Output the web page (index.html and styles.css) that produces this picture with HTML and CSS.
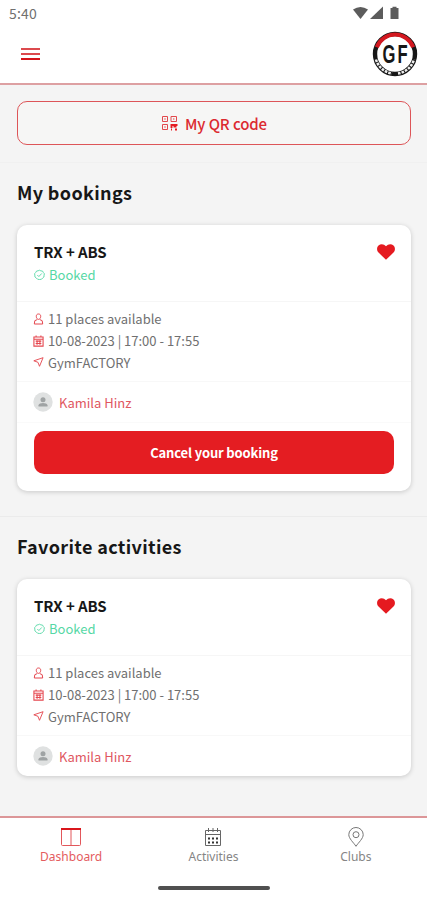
FILE: index.html
```html
<!DOCTYPE html>
<html lang="en">
<head>
    <meta charset="UTF-8">
    <title>GymFACTORY - Dashboard</title>
    <meta name="viewport" content="width=device-width, initial-scale=1.0">
    <link rel="stylesheet" href="styles.css">
</head>
<body>
    <!-- Shared icons -->
    <svg class="sprite" width="0" height="0">
        <symbol id="heart" viewBox="0 0 18 16">
            <path d="M9 15.8 1.5 8.6C-.4 6.700-.4 3.400 1.500 1.600 3.600-.4 6.900-.2 9 2.300c2.100-2.500 5.400-2.700 7.500-.7 1.900 1.800 1.900 5.100 0 7z" fill="#e51a20"/>
        </symbol>
        <symbol id="check" viewBox="0 0 12 12">
            <path d="M6 .8 7.500 1.500 9.300 1.700 10.200 3.300 11.300 4.600 11 6.300 10.800 8.200 9.400 9.300 8.100 10.700 6 10.900 4 10.700 2.600 9.300 1 8.100.9 6.200.7 4.500 1.900 3.200 2.800 1.700 4.500 1.400z"/>
            <path d="M3.600 6 5.300 7.700 8.500 4.300"/>
        </symbol>
        <symbol id="person" viewBox="0 0 10 12">
            <path d="M5 1C3.300 1 2.700 2.200 2.800 3.600 2.900 5.200 3.800 6.400 5 6.400s2.100-1.200 2.200-2.800C7.300 2.200 6.700 1 5 1zM3.500 6.700 1.300 7.700.8 11h8.400l-.5-3.300-2.200-1"/>
        </symbol>
        <symbol id="date" viewBox="0 0 10 11">
            <path d="M.8 1.800h8.400v8.400H.8zM.8 3.900h8.400M2.800.4v1.800M7.200.4v1.800M2.400 5.600h5.200M2.400 7.800h5.200M3.700 4.700v4.200M6.300 4.700v4.200"/>
        </symbol>
        <symbol id="arrow" viewBox="0 0 12 11">
            <path d="M11 .8.9 4.200l4.500 1.600 1.700 4.400z"/>
        </symbol>
        <symbol id="avatar" viewBox="0 0 20 20">
            <circle cx="10" cy="10" r="9.700" fill="#dfe1e1"/>
            <circle cx="10" cy="7.700" r="2.500" fill="#9fa3a4"/>
            <path d="M5.500 14.500v-1.200c0-1.500 2.600-2.300 4.500-2.300s4.500.8 4.500 2.300v1.200z" fill="#9fa3a4"/>
        </symbol>
    </svg>

    <div class="status-bar">
        <span class="clock">5:40</span>
        <svg class="signals" width="48" height="14" viewBox="0 0 48 14" fill="#5c5c5c">
            <path d="M0 3.600Q7.500 -1.500 15 3.600L7.500 13z"/>
            <path d="M17 13 30 .5V13z"/>
            <path d="M37.500 2h2V.7h4V2h2v11h-8z"/>
        </svg>
    </div>

    <header class="header">
        <button class="menu-btn"><span></span><span></span><span></span></button>
        <svg class="logo" width="46" height="46" viewBox="0 0 46 46" fill="none">
            <circle cx="23" cy="23" r="20" fill="#fff" stroke="#171717" stroke-width="4.400"/>
            <!-- red upper arc, light band below -->
            <path d="M4.800 16.300A19.400 19.400 0 0 1 41.200 16.300" stroke="#d31820" stroke-width="4"/>
            <path d="M4 28.500A19.800 19.800 0 0 0 20 42.500M26 42.500A19.800 19.800 0 0 0 42 28.500" stroke="#ededed" stroke-width="2.600" stroke-dasharray="2.600 1.100"/>
            <text class="logo-letters" x="10.500" y="32" textLength="27" lengthAdjust="spacingAndGlyphs">GF</text>
        </svg>
    </header>

    <main class="content">
        <section class="qr">
            <button class="qr-btn">
                <svg width="17" height="16" viewBox="0 0 17 16" fill="none" stroke="#e2484c">
                    <path d="M1.500 1.500h5v5h-5zM10 1.500h5.500v5H10zM1.500 9.500h5v5h-5z"/>
                    <path d="M3.500 4h1M12.300 4h1M3.500 12h1" stroke-width="1.500"/>
                    <path d="M9.500 10h7M10.500 9.500v3.500M12.500 11.500h3M10 14.500h1M14 14.500h2" stroke="#e51a20" stroke-width="1.900"/>
                </svg>
                <span>My QR code</span>
            </button>
        </section>

        <section class="section">
            <h2>My bookings</h2>
            <article class="card">
                <div class="card-head">
                    <div>
                        <h3>TRX + ABS</h3>
                        <div class="booked"><svg class="icon"><use href="#check"/></svg><span>Booked</span></div>
                    </div>
                    <svg class="heart"><use href="#heart"/></svg>
                </div>
                <div class="details">
                    <div class="row"><svg class="icon"><use href="#person"/></svg><span>11 places available</span></div>
                    <div class="row"><svg class="icon"><use href="#date"/></svg><span>10-08-2023 | 17:00 - 17:55</span></div>
                    <div class="row"><svg class="icon"><use href="#arrow"/></svg><span>GymFACTORY</span></div>
                </div>
                <div class="trainer"><svg class="avatar"><use href="#avatar"/></svg><span>Kamila Hinz</span></div>
                <div class="card-action">
                    <button class="cancel-btn">Cancel your booking</button>
                </div>
            </article>
        </section>

        <section class="section favorites">
            <h2>Favorite activities</h2>
            <article class="card">
                <div class="card-head">
                    <div>
                        <h3>TRX + ABS</h3>
                        <div class="booked"><svg class="icon"><use href="#check"/></svg><span>Booked</span></div>
                    </div>
                    <svg class="heart"><use href="#heart"/></svg>
                </div>
                <div class="details">
                    <div class="row"><svg class="icon"><use href="#person"/></svg><span>11 places available</span></div>
                    <div class="row"><svg class="icon"><use href="#date"/></svg><span>10-08-2023 | 17:00 - 17:55</span></div>
                    <div class="row"><svg class="icon"><use href="#arrow"/></svg><span>GymFACTORY</span></div>
                </div>
                <div class="trainer"><svg class="avatar"><use href="#avatar"/></svg><span>Kamila Hinz</span></div>
            </article>
        </section>
    </main>

    <footer class="footer">
        <nav class="tabs">
            <a class="tab active">
                <svg width="22" height="20" viewBox="0 0 22 20" fill="none" stroke="#e2575b">
                    <path d="M1.500 2v15.500q0 1 1 1h17q1 0 1-1V2M11 2v16.500"/>
                    <path d="M1 2h20" stroke="#d9161c" stroke-width="2"/>
                </svg>
                <span>Dashboard</span>
            </a>
            <a class="tab">
                <svg width="22" height="20" viewBox="0 0 22 20" fill="none" stroke="#666">
                    <path d="M3.500 3.500h15v15h-15zM3.500 7.500h15M6.500 1v4M11 1v4M15.500 1v4"/>
                    <path d="M6 11.500h10M6 15.500h10" stroke="#333" stroke-width="2" stroke-dasharray="2 2"/>
                </svg>
                <span>Activities</span>
            </a>
            <a class="tab">
                <svg width="22" height="20" viewBox="0 0 22 20" fill="none" stroke="#777">
                    <path d="M11 19.300C8.500 15.500 3.800 11.500 3.800 7.700a7.200 7.200 0 0 1 14.400 0c0 3.800-4.700 7.800-7.200 11.600z"/>
                    <circle cx="11" cy="7.700" r="3"/>
                </svg>
                <span>Clubs</span>
            </a>
        </nav>
        <div class="home-bar"></div>
    </footer>
</body>
</html>
```
FILE: styles.css
```css
* {
    box-sizing: border-box;
}

body {
    margin: 0;
    height: 900px;
    display: flex;
    flex-direction: column;
    overflow: hidden;
    background: #fff;
    color: #707070;
    font-family: "Noto Sans CJK SC", "Noto Sans", sans-serif;
    font-size: 13px;
}

h2, h3 {
    margin: 0;
    color: #171717;
}

button {
    font-family: inherit;
    padding: 0;
    cursor: pointer;
}

svg {
    display: block;
    flex: none;
}

.sprite {
    position: absolute;
}

/* === Phone status bar === */
.status-bar {
    height: 28px;
    padding: 0 26px 3px 9px;
    display: flex;
    align-items: center;
    justify-content: space-between;
}

.clock {
    color: #707070;
    font-size: 14px;
    letter-spacing: 0.2px;
}

/* === Header === */
.header {
    height: 57px;
    padding: 0 9px 3px 21px;
    display: flex;
    align-items: center;
    justify-content: space-between;
    border-bottom: 2px solid #dda0a2;
}

.menu-btn {
    width: 19px;
    display: flex;
    flex-direction: column;
    gap: 3px;
    border: 0;
    background: none;
}

.menu-btn span {
    height: 2px;
    background: #dc4a4e;
}

.menu-btn span:last-child {
    background: #d4141b;
}

.logo-letters {
    font-family: "Liberation Sans", Arial, sans-serif;
    font-size: 25px;
    font-weight: bold;
    letter-spacing: 3px;
    fill: #171717;
}

/* === Content === */
.content {
    flex: 1;
    background: #f4f4f4;
}

.qr {
    height: 78px;
    padding: 16px 16px 0 17px;
    border-bottom: 1px solid #f0f0f0;
}

.qr-btn {
    width: 100%;
    height: 44px;
    display: flex;
    align-items: center;
    justify-content: center;
    gap: 7px;
    border: 1px solid #dd5558;
    border-radius: 10px;
    background: #f6f6f5;
    color: #dc2a30;
    font-size: 15px;
    font-weight: 500;
    letter-spacing: -0.1px;
}

.section {
    height: 354px;
    padding: 15px 16px 0 17px;
    border-bottom: 1px solid #ebebeb;
}

.favorites {
    height: auto;
    border-bottom: 0;
}

h2 {
    height: 47px;
    line-height: 29px;
    font-size: 18px;
    letter-spacing: 0.35px;
}

/* === Activity card === */
.card {
    background: #fff;
    border-radius: 10px;
    box-shadow: 0 1px 5px rgba(0, 0, 0, 0.18);
}

.card-head {
    height: 77px;
    padding: 16px 16px 0 17px;
    display: flex;
    justify-content: space-between;
    border-bottom: 1px solid #f6f6f6;
}

h3 {
    line-height: 22px;
    font-size: 15px;
    letter-spacing: -0.1px;
}

.heart {
    width: 18px;
    height: 16px;
    margin-top: 3px;
}

.icon {
    width: 11px;
    height: 12px;
    fill: none;
    stroke: #e5474f;
    stroke-width: 1;
}

.booked {
    display: flex;
    align-items: center;
    gap: 4px;
    height: 23px;
    color: #55d8a5;
}

.booked .icon {
    stroke: #55d8a5;
}

.details {
    height: 80px;
    padding: 6px 16px 0;
    border-bottom: 1px solid #f8f8f8;
}

.row {
    height: 21.700px;
    display: flex;
    align-items: center;
    gap: 4px;
}

.trainer {
    height: 40px;
    padding-left: 16px;
    display: flex;
    align-items: center;
    gap: 6px;
    color: #e0575f;
}

.avatar {
    width: 20px;
    height: 20px;
}

.card-action {
    height: 69px;
    padding: 8px 17px 0;
    border-top: 1px solid #fafafa;
}

.cancel-btn {
    width: 100%;
    height: 43px;
    border: 0;
    border-radius: 10px;
    background: #e41d22;
    color: #fff;
    font-size: 13px;
    font-weight: bold;
    letter-spacing: -0.15px;
}

/* === Bottom tabs === */
.footer {
    height: 84px;
    border-top: 2px solid #dc9698;
}

.tabs {
    height: 68px;
    padding-top: 9px;
    display: grid;
    grid-template-columns: repeat(3, 1fr);
}

.tab {
    display: flex;
    flex-direction: column;
    align-items: center;
    color: #858585;
    font-family: "Noto Sans", sans-serif;
    font-size: 12px;
    line-height: 20px;
}

.tab.active {
    color: #e45c60;
}

.home-bar {
    width: 112px;
    height: 4px;
    margin: 0 auto;
    border-radius: 2px;
    background: #505050;
}
```
